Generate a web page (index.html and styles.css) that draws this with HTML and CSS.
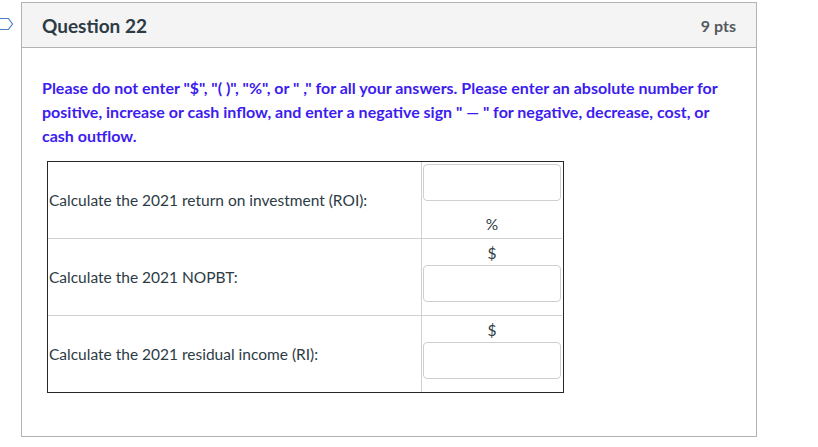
FILE: index.html
```html
<!DOCTYPE html>
<html>
<head>
<meta charset="utf-8">
<link rel="stylesheet" href="styles.css">
</head>
<body>
<svg class="flag" width="14" height="14" viewBox="0 0 14 14"><path d="M-4 1.5 H8.5 L12.5 7 L8.5 12.5 H-4" fill="none" stroke="#4a7fc1" stroke-width="1.2"/></svg>
<div class="card">
  <div class="header">
    <span class="title">Question 22</span>
    <span class="pts">9 pts</span>
  </div>
  <div class="body">
    <p class="note">Please do not enter "$", "( )", "%", or " ," for all your answers. Please enter an absolute number for positive, increase or cash inflow, and enter a negative sign " — " for negative, decrease, cost, or cash outflow.</p>
    <div class="grid">
      <div class="label">Calculate the 2021 return on investment (ROI):</div>
      <div class="answer first">
        <div class="box"></div>
        <div class="unit after">%</div>
      </div>
      <div class="label sep">Calculate the 2021 NOPBT:</div>
      <div class="answer sep">
        <div class="unit before">$</div>
        <div class="box"></div>
      </div>
      <div class="label sep">Calculate the 2021 residual income (RI):</div>
      <div class="answer sep">
        <div class="unit before">$</div>
        <div class="box"></div>
      </div>
    </div>
  </div>
</div>
</body>
</html>
```
FILE: styles.css
```css
html, body {
  margin: 0;
  padding: 0;
  background: #fff;
}
body {
  position: relative;
  font-family: Lato, "Liberation Sans", sans-serif;
  padding-top: 2px;
}
.flag {
  position: absolute;
  left: 0;
  top: 17px;
}
.card {
  margin-left: 21px;
  width: 734px;
  height: 433px;
  border: 1px solid #b3b3b3;
}
.header {
  height: 44px;
  background: #f4f4f4;
  border-bottom: 1px solid #b3b3b3;
  display: flex;
  align-items: center;
  justify-content: space-between;
  padding: 0 20px;
}
.title {
  font-size: 19px;
  font-weight: 700;
  color: #2d3b45;
}
.pts {
  font-size: 16px;
  font-weight: 700;
  color: #555a5e;
}
.body {
  padding: 28px 20px 0 20px;
}
.note {
  margin: 0;
  font-size: 16px;
  line-height: 24px;
  font-weight: 700;
  color: #3c1cf0;
}
.grid {
  margin-top: 13px;
  margin-left: 5px;
  width: 515px;
  border: 1px solid #262626;
  display: grid;
  grid-template-columns: 373px 141px;
}
.label {
  height: 76px;
  display: flex;
  align-items: center;
  padding-left: 1px;
  font-size: 15.5px;
  color: #2d3b45;
}
.answer {
  height: 76px;
  border-left: 1px solid #d0d0d0;
  padding: 0 1px;
  display: flex;
  flex-direction: column;
}
.sep {
  border-top: 1px solid #d0d0d0;
}
.answer.first {
  padding-top: 2px;
  height: 74px;
}
.box {
  height: 35px;
  border: 1px solid #cfcfcf;
  border-radius: 4px;
  background: #fff;
}
.unit {
  height: 20px;
  line-height: 20px;
  text-align: center;
  font-size: 15.5px;
  color: #2d3b45;
}
.unit.after {
  margin-top: 13px;
}
.unit.before {
  margin-top: 4px;
  margin-bottom: 2px;
}
```
